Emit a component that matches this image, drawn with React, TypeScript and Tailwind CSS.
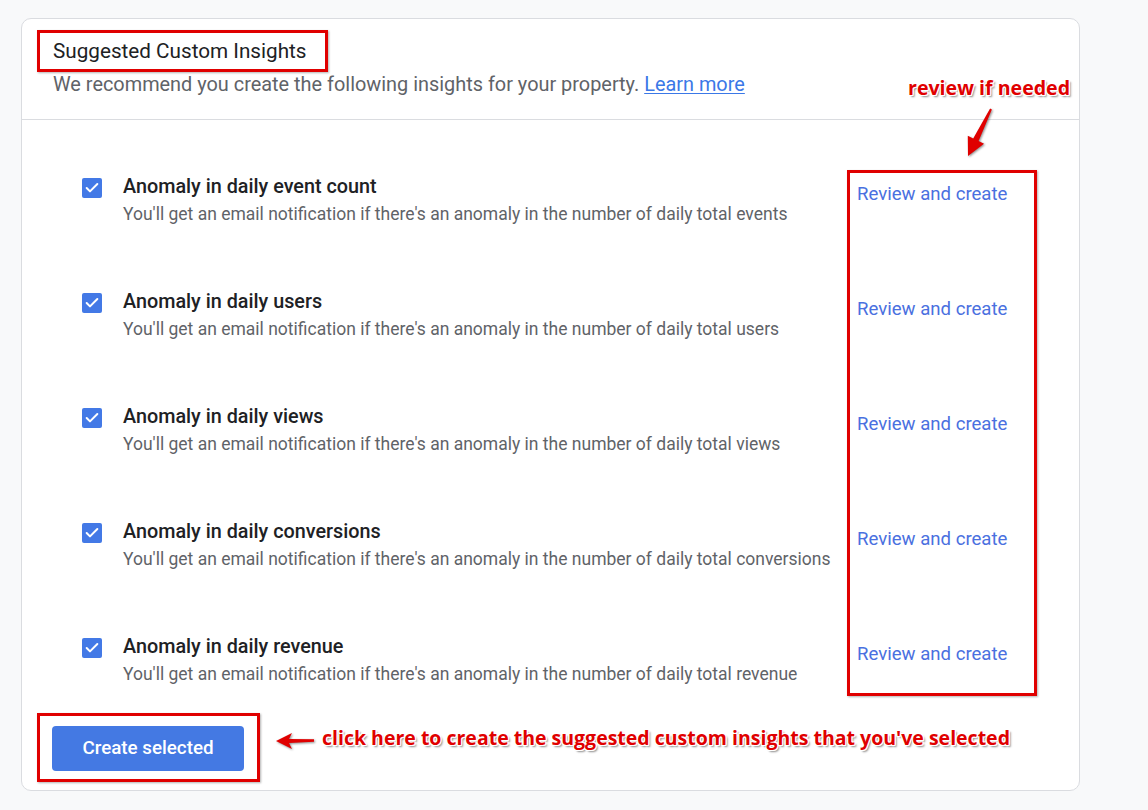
import { Check } from 'lucide-react';

interface Insight {
  id: number;
  title: string;
  metric: string;
}

const insights: Insight[] = [
  { id: 1, title: 'Anomaly in daily event count', metric: 'events' },
  { id: 2, title: 'Anomaly in daily users', metric: 'users' },
  { id: 3, title: 'Anomaly in daily views', metric: 'views' },
  { id: 4, title: 'Anomaly in daily conversions', metric: 'conversions' },
  { id: 5, title: 'Anomaly in daily revenue', metric: 'revenue' },
];

const noteShadow =
  '[text-shadow:1px_1px_0_#fff,-1px_-1px_0_#fff,1px_-1px_0_#fff,-1px_1px_0_#fff,0_1px_0_#fff,1px_0_0_#fff,2px_2px_2px_#8a8a8a]';

export default function App() {
  return (
    <div className="min-h-[810px] bg-[#f8f9fa] pt-[18px] pl-[21px] font-['Roboto',sans-serif]">
      <div className="relative w-[1059px] bg-white border border-[#dadce0] rounded-[10px]">
        {/* Header */}
        <div className="pt-[11px] pl-[15px] pb-[22px] border-b border-[#dadce0]">
          <div className="inline-block border-[3px] border-[#e00000] pl-[13px] pr-[18px] py-1 shadow-[1px_1px_2px_rgba(0,0,0,0.3)]">
            <h1 className="text-[20.7px] leading-7 text-[#202124]">Suggested Custom Insights</h1>
          </div>
          <p className="mt-[1px] pl-4 text-[19.9px] leading-6 text-[#5f6368]">
            We recommend you create the following insights for your property.{' '}
            <a className="text-[#3b78e7] underline underline-offset-2">Learn more</a>
          </p>
        </div>

        {/* Insights list */}
        <div className="relative pt-[55px] flex flex-col gap-[64px]">
          {insights.map(item => (
            <div key={item.id} className="flex items-start pl-[60px]">
              <div className="mt-[3px] w-5 h-5 rounded-[2px] bg-[#4379e6] flex items-center justify-center">
                <Check className="w-4 h-4 text-white" strokeWidth={3} />
              </div>
              <div className="ml-[21px] w-[713px]">
                <p className="text-[19.8px] leading-6 font-medium text-[#202124]">{item.title}</p>
                <p className="mt-[3px] text-[17.5px] leading-6 text-[#5f6368]">
                  You'll get an email notification if there's an anomaly in the number of daily total {item.metric}
                </p>
              </div>
              <a className="ml-[21px] mt-[7px] text-[18.6px] leading-6 text-[#4a70e0]">Review and create</a>
            </div>
          ))}

          {/* annotation box round the links */}
          <div className="absolute left-[825px] top-[50px] w-[190px] h-[526px] border-[3px] border-[#e00000] shadow-[1px_1px_2px_rgba(0,0,0,0.3)]" />
        </div>

        {/* Footer */}
        <div className="flex items-start mt-[27px] pl-[15px] pb-2">
          <div className="border-[3px] border-[#e00000] pl-3 pr-[13px] pt-[10px] pb-2 shadow-[1px_1px_2px_rgba(0,0,0,0.3)]">
            <button className="w-[192px] h-[45px] rounded-[4px] bg-[#4479e3] text-white text-[18.8px] font-medium">
              Create selected
            </button>
          </div>
          <svg className="ml-3 mt-[17px] drop-shadow-[1px_1px_1px_rgba(0,0,0,0.45)]" width="44" height="22" viewBox="0 0 44 22">
            <polygon points="4,11 20,3 17,9 42,9.3 42,11.7 17,13 20,19" fill="#e00000" />
          </svg>
          <p className={`ml-[6px] mt-3 text-[19.5px] leading-[26px] font-bold text-[#e00000] font-['Open_Sans',sans-serif] ${noteShadow}`}>
            click here to create the suggested custom insights that you've selected
          </p>
        </div>

        {/* review annotation */}
        <p className={`absolute left-[886px] top-[56px] text-[19.6px] leading-[26px] font-bold text-[#e00000] font-['Open_Sans',sans-serif] ${noteShadow}`}>
          review if needed
        </p>
        <svg className="absolute left-[939px] top-[86px] drop-shadow-[1px_1px_1px_rgba(0,0,0,0.45)]" width="36" height="56" viewBox="0 0 36 56">
          <polygon points="30.9,4.4 17.6,36.1 23,38.8 7,51 6.8,30.8 12.2,33.5 29.1,3.6" fill="#e00000" />
        </svg>
      </div>
    </div>
  );
}
